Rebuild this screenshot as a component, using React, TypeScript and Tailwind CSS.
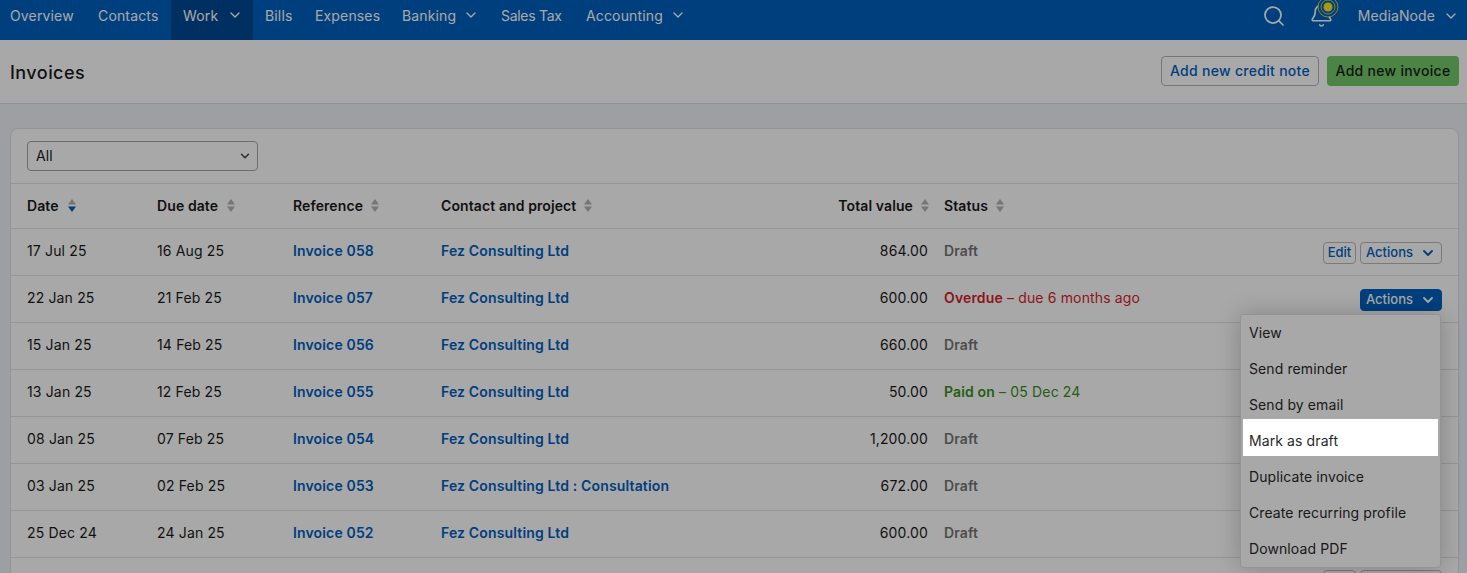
import { ChevronDown, Search, Bell } from "lucide-react";

const NAV = [
  { label: "Overview", cls: "w-[86px] pl-2.5" },
  { label: "Contacts", cls: "w-[85px] pl-3" },
  { label: "Work", cls: "w-[82px] gap-[9px] bg-[#004a94] pl-3", menu: true },
  { label: "Bills", cls: "w-[50px] pl-3" },
  { label: "Expenses", cls: "w-[87px] pl-3" },
  { label: "Banking", cls: "w-[99px] gap-[7px] pl-3", menu: true },
  { label: "Sales Tax", cls: "w-[85px] pl-3 tracking-[-0.3px]" },
  { label: "Accounting", cls: "w-[126px] gap-[7px] pl-3", menu: true },
];

const ROWS = [
  { date: "17 Jul 25", due: "16 Aug 25", ref: "Invoice 058", contact: "Fez Consulting Ltd", total: "864.00", status: "draft", edit: true },
  { date: "22 Jan 25", due: "21 Feb 25", ref: "Invoice 057", contact: "Fez Consulting Ltd", total: "600.00", status: "overdue", open: true },
  { date: "15 Jan 25", due: "14 Feb 25", ref: "Invoice 056", contact: "Fez Consulting Ltd", total: "660.00", status: "draft" },
  { date: "13 Jan 25", due: "12 Feb 25", ref: "Invoice 055", contact: "Fez Consulting Ltd", total: "50.00", status: "paid" },
  { date: "08 Jan 25", due: "07 Feb 25", ref: "Invoice 054", contact: "Fez Consulting Ltd", total: "1,200.00", status: "draft" },
  { date: "03 Jan 25", due: "02 Feb 25", ref: "Invoice 053", contact: "Fez Consulting Ltd : Consultation", total: "672.00", status: "draft" },
  { date: "25 Dec 24", due: "24 Jan 25", ref: "Invoice 052", contact: "Fez Consulting Ltd", total: "600.00", status: "draft" },
];

const MENU = ["View", "Send reminder", "Send by email", "Mark as draft", "Duplicate invoice", "Create recurring profile", "Download PDF"];

function SortIcon({ active }: { active?: boolean }) {
  return (
    <svg width="8" height="15" viewBox="0 0 8 15" className="shrink-0" aria-hidden="true">
      <path d="M4 1 L8 6.5 H0 Z" fill="#b4b4b4" />
      <path d="M4 14 L8 8.5 H0 Z" fill={active ? "#0060c0" : "#b4b4b4"} />
    </svg>
  );
}

function Status({ status }: { status: string }) {
  if (status === "overdue") {
    return (
      <span className="text-[#d81e2c]">
        <span className="font-semibold">Overdue</span> – due 6 months ago
      </span>
    );
  }
  if (status === "paid") {
    return (
      <span className="text-[#37901a]">
        <span className="font-semibold">Paid on</span> – 05 Dec 24
      </span>
    );
  }
  return <span className="font-semibold text-[#757575]">Draft</span>;
}

function ActionsButton({ open }: { open?: boolean }) {
  return (
    <button
      className={
        open
          ? "flex h-[22px] w-[82px] items-center justify-between rounded border border-[#0060c0] bg-[#0060c0] pl-[5px] pr-[5px] text-[13px] font-medium tracking-normal text-white"
          : "flex h-[22px] w-[82px] items-center justify-between rounded border border-[#b9b9b9] bg-white pl-[5px] pr-[5px] text-[13px] font-medium tracking-normal text-[#0060c0]"
      }
    >
      Actions
      <ChevronDown className="h-4 w-4" strokeWidth={2.75} aria-hidden="true" />
    </button>
  );
}

export default function App() {
  return (
    <div className="relative h-[573px] overflow-hidden bg-[#eef2f8] font-['Inter',sans-serif] text-[14px] tracking-[0.15px] text-[#1a1a1a]">
      {/* Top nav */}
      <nav className="flex h-10 justify-between bg-[#0060c0] pr-2 text-white">
        <div className="flex h-full">
          {NAV.map((item) => (
            <a key={item.label} className={`flex h-full items-center pb-2.5 ${item.cls}`}>
              {item.label}
              {item.menu && <ChevronDown className="h-4 w-4" strokeWidth={2} aria-hidden="true" />}
            </a>
          ))}
        </div>
        <div className="flex items-center pb-[9px]">
          <Search className="h-6 w-6" strokeWidth={1.75} aria-hidden="true" />
          <div className="relative ml-[23px] mr-6">
            <Bell className="h-[25px] w-[25px]" strokeWidth={1.5} aria-hidden="true" />
            <svg width="22" height="22" viewBox="0 0 22 22" className="absolute -top-[7px] left-[8px]" aria-hidden="true">
              <circle cx="11" cy="11" r="10" fill="#0060c0" stroke="#ffe81a" strokeWidth="0.8" />
              <circle cx="11" cy="11" r="7" fill="none" stroke="#ffe81a" strokeWidth="0.8" />
              <circle cx="11" cy="11" r="4.5" fill="#ffe81a" />
            </svg>
          </div>
          <span className="tracking-[0.1px]">MediaNode</span>
          <ChevronDown className="ml-2 h-4 w-4" strokeWidth={2} aria-hidden="true" />
        </div>
      </nav>

      {/* Page header */}
      <header className="flex h-[64px] items-center justify-between border-b border-[#d8dde5] bg-white pl-2.5 pr-2">
        <h1 className="mt-[1px] text-[18px] font-medium tracking-[0.45px]">Invoices</h1>
        <div className="mb-[2px] flex gap-2">
          <button className="h-[30px] w-[158px] rounded border border-[#b0b6bf] bg-white text-[14px] font-medium tracking-[0.3px] text-[#0060c0]">
            Add new credit note
          </button>
          <button className="h-[30px] w-[132px] rounded bg-[#72c96a] text-[14px] font-medium tracking-[0.3px] text-[#1a1a1a]">
            Add new invoice
          </button>
        </div>
      </header>

      {/* Invoice card */}
      <main className="pl-2.5 pr-2 pt-[24px]">
        <div className="rounded-t-lg border border-[#dcdfe4] bg-white">
          <div className="h-[55px] border-b border-[#e2e2e2] px-4 pt-3">
            <div className="flex h-[30px] w-[231px] items-center justify-between rounded border border-[#a6a6a6] bg-white pb-[1px] pl-[8px] pr-[5px]">
              All
              <ChevronDown className="h-3.5 w-3.5 text-[#444]" strokeWidth={2.5} aria-hidden="true" />
            </div>
          </div>

          <div className="flex h-[45px] items-center border-b border-[#e2e2e2] pb-[2px] pl-4 pr-4 font-semibold tracking-[0.1px]">
            <div className="flex w-[130px] items-center gap-[9px]">Date <SortIcon active /></div>
            <div className="flex w-[136px] items-center gap-[9px]">Due date <SortIcon /></div>
            <div className="flex w-[148px] items-center gap-2">Reference <SortIcon /></div>
            <div className="flex w-[386px] items-center gap-2">Contact and project <SortIcon /></div>
            <div className="flex w-[102px] shrink-0 items-center justify-end gap-2">Total value <SortIcon /></div>
            <div className="ml-[15px] flex items-center gap-2">Status <SortIcon /></div>
          </div>

          {ROWS.map((row) => (
            <div key={row.ref} className="flex h-[47px] items-center border-b border-[#e2e2e2] pb-[3px] pl-4 pr-4">
              <div className="w-[130px]">{row.date}</div>
              <div className="w-[136px]">{row.due}</div>
              <div className="w-[148px] font-semibold text-[#0060c0]">{row.ref}</div>
              <div className="w-[386px] font-semibold text-[#0060c0]">{row.contact}</div>
              <div className="w-[101px] shrink-0 text-right">{row.total}</div>
              <div className="ml-4 flex-1"><Status status={row.status} /></div>
              <div className="mt-[5px] flex gap-[4px]">
                {row.edit && (
                  <button className="h-[22px] w-[33px] rounded border border-[#b9b9b9] bg-white text-[13px] font-medium tracking-normal text-[#0060c0]">
                    Edit
                  </button>
                )}
                {(row.edit || row.open) && <ActionsButton open={row.open} />}
              </div>
            </div>
          ))}

          {/* Next row, cut off by the window */}
          <div className="flex h-[47px] justify-end gap-[4px] pr-4 pt-[12px]">
            <button className="h-[22px] w-[33px] rounded border border-[#b9b9b9] bg-white" />
            <button className="h-[22px] w-[82px] rounded border border-[#b9b9b9] bg-white" />
          </div>
        </div>
      </main>

      {/* Actions dropdown */}
      <div className="absolute left-[1240px] top-[314px] w-[201px] rounded-[3px] border border-[#e0e0e0] bg-white shadow-[0_0_24px_rgba(0,0,0,0.22)]">
        {MENU.map((label) => (
          <div
            key={label}
            className={
              label === "Mark as draft"
                ? "relative z-20 mx-[2px] -mt-[4px] mb-[3px] flex h-[37px] items-center bg-white pl-[6px] pt-[5px] tracking-[0.1px] text-[#2a2a2a]"
                : "flex h-[36px] items-center pb-[2px] pl-[8px] tracking-[0.1px] text-[#2a2a2a]"
            }
          >
            {label}
          </div>
        ))}
      </div>

      {/* Dim layer, only the highlighted menu item sits above it */}
      <div className="absolute inset-0 z-10 bg-black/[.34]" />
    </div>
  );
}
